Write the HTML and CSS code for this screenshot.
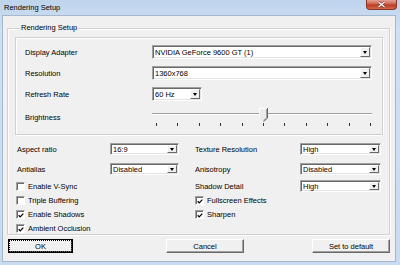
FILE: index.html
```html
<!DOCTYPE html>
<html lang="en">
<head>
    <meta charset="UTF-8">
    <title>Rendering Setup</title>
    <link rel="stylesheet" href="styles.css">
</head>
<body>
    <div class="window">
        <div class="titlebar">
            <span class="title">Rendering Setup</span>
            <span class="close">
                <svg width="9" height="7" viewBox="0 0 9 7">
                    <path d="M1.5 1 L7.5 6 M7.5 1 L1.5 6" stroke="#7a2a1f" stroke-width="2.4"/>
                    <path d="M1.5 1 L7.5 6 M7.5 1 L1.5 6" stroke="#fff" stroke-width="1.4"/>
                </svg>
            </span>
        </div>
        <div class="client">
            <fieldset class="group">
                <legend>Rendering Setup</legend>
                <div class="panel">
                    <div class="row">
                        <span class="label">Display Adapter</span>
                        <div class="combo wide"><span class="value">NVIDIA GeForce 9600 GT (1)</span><span class="drop"></span></div>
                    </div>
                    <div class="row">
                        <span class="label">Resolution</span>
                        <div class="combo wide"><span class="value">1360x768</span><span class="drop"></span></div>
                    </div>
                    <div class="row">
                        <span class="label">Refresh Rate</span>
                        <div class="combo narrow"><span class="value">60 Hz</span><span class="drop"></span></div>
                    </div>
                    <div class="row slider-row">
                        <span class="label">Brightness</span>
                        <div class="slider">
                            <div class="track"></div>
                            <div class="thumb" style="left: 107px">
                                <svg width="9" height="14" viewBox="0 0 9 14">
                                    <path d="M0 0 H9 V10 L4.5 14 L0 10 Z" fill="#ececec"/>
                                    <path d="M0.5 10.2 V0.5 H8" stroke="#fff" fill="none"/>
                                    <path d="M8.5 0 V10.2 L4.5 13.6" stroke="#696969" fill="none"/>
                                    <path d="M7.5 1 V9.8 L4.5 12.4" stroke="#a0a0a0" fill="none"/>
                                </svg>
                            </div>
                            <div class="ticks">
                                <i></i><i></i><i></i><i></i><i></i><i></i><i></i><i></i><i></i><i></i><i></i>
                            </div>
                        </div>
                    </div>
                </div>

                <div class="options">
                    <div class="col col-left">
                        <div class="orow">
                            <span class="olabel">Aspect ratio</span>
                            <div class="combo small"><span class="value">16:9</span><span class="drop"></span></div>
                        </div>
                        <div class="orow last-combo">
                            <span class="olabel">Antialias</span>
                            <div class="combo small"><span class="value">Disabled</span><span class="drop"></span></div>
                        </div>
                        <div class="check"><span class="box"></span>Enable V-Sync</div>
                        <div class="check"><span class="box"></span>Triple Buffering</div>
                        <div class="check"><span class="box checked"><svg width="7" height="7" viewBox="0 0 7 7"><path d="M0.8 3.2 L2.6 5.2 L6.2 1.2" stroke="#000" stroke-width="1.4" fill="none"/></svg></span>Enable Shadows</div>
                        <div class="check"><span class="box checked"><svg width="7" height="7" viewBox="0 0 7 7"><path d="M0.8 3.2 L2.6 5.2 L6.2 1.2" stroke="#000" stroke-width="1.4" fill="none"/></svg></span>Ambient Occlusion</div>
                    </div>
                    <div class="col col-right">
                        <div class="orow">
                            <span class="olabel">Texture Resolution</span>
                            <div class="combo medium"><span class="value">High</span><span class="drop"></span></div>
                        </div>
                        <div class="orow tight">
                            <span class="olabel">Anisotropy</span>
                            <div class="combo medium"><span class="value">Disabled</span><span class="drop"></span></div>
                        </div>
                        <div class="orow last-combo-right">
                            <span class="olabel">Shadow Detail</span>
                            <div class="combo medium"><span class="value">High</span><span class="drop"></span></div>
                        </div>
                        <div class="check"><span class="box checked"><svg width="7" height="7" viewBox="0 0 7 7"><path d="M0.8 3.2 L2.6 5.2 L6.2 1.2" stroke="#000" stroke-width="1.4" fill="none"/></svg></span>Fullscreen Effects</div>
                        <div class="check"><span class="box checked"><svg width="7" height="7" viewBox="0 0 7 7"><path d="M0.8 3.2 L2.6 5.2 L6.2 1.2" stroke="#000" stroke-width="1.4" fill="none"/></svg></span>Sharpen</div>
                    </div>
                </div>
            </fieldset>

            <div class="buttons">
                <div class="btn default">OK</div>
                <div class="btn cancel">Cancel</div>
                <div class="btn reset">Set to default</div>
            </div>
        </div>
    </div>
</body>
</html>
```

FILE: styles.css
```css
* {
    box-sizing: border-box;
}

body {
    margin: 0;
    font-family: "Liberation Sans", Arial, sans-serif;
    font-size: 7.5px;
    line-height: 9px;
    color: #000;
    background: #c6daf0;
}

.window {
    width: 400px;
    height: 265px;
    display: flex;
    flex-direction: column;
    background: linear-gradient(to bottom, #bed4ec, #cfe0f3 30px, #c8dbf0);
}

.titlebar {
    height: 15px;
    display: flex;
    justify-content: space-between;
    align-items: flex-start;
    padding-left: 4px;
}

.title {
    margin-top: 3px;
}

.close {
    width: 31px;
    height: 10px;
    margin-right: 3px;
    display: flex;
    align-items: center;
    justify-content: center;
    background: linear-gradient(to bottom, #e4a394, #d0604b 45%, #bd3a22 55%, #cf6a4f);
    border: 1px solid #8a3526;
    border-top: none;
    border-radius: 0 0 4px 4px;
}

.client {
    flex: 1;
    margin: 0 4px 3px 2px;
    padding: 7px 5px 0 4px;
    background: #f0f0f0;
    border: 1px solid #a7b8cc;
}

.group {
    margin: 0;
    width: 383px;
    padding: 4px 6px 1px 7px;
    border: 1px solid #d0d0d0;
    box-shadow: inset 1px 1px 0 #fff, 1px 1px 0 #fff;
}

.group legend {
    margin-left: 5px;
    padding: 0 1px;
    line-height: 10px;
    color: #000;
    background: #f0f0f0;
}

.panel {
    height: 98px;
    padding: 7px 9px 0 9px;
    border: 1px solid #d0d0d0;
    box-shadow: inset 1px 1px 0 #fff, 1px 1px 0 #fff;
}

.row {
    display: flex;
    align-items: center;
    height: 14px;
    margin-bottom: 7px;
}

.label {
    width: 127px;
}

.combo {
    height: 14px;
    display: flex;
    align-items: stretch;
    background: #fff;
    border: 1px solid;
    border-color: #a0a0a0 #fff #fff #a0a0a0;
    box-shadow: inset 1px 1px 0 #696969, inset -1px -1px 0 #e3e3e3;
}

.combo .value {
    flex: 1;
    padding-left: 2px;
    display: flex;
    align-items: center;
}

.combo .drop {
    width: 10px;
    margin: 1px 1px 1px 0;
    display: flex;
    align-items: center;
    justify-content: center;
    background: #f0f0f0;
    border: 1px solid;
    border-color: #fff #696969 #696969 #fff;
}

.combo .drop::after {
    content: "";
    border-left: 2px solid transparent;
    border-right: 2px solid transparent;
    border-top: 3px solid #000;
}

.combo.wide {
    width: 220px;
}

.combo.narrow {
    width: 50px;
}

.combo.small {
    width: 69px;
    height: 12px;
}

.combo.medium {
    width: 81px;
    height: 12px;
}

.slider-row {
    height: 19px;
    margin-bottom: 0;
}

.slider {
    position: relative;
    width: 220px;
    height: 19px;
}

.track {
    margin-top: 5px;
    height: 2px;
    border-top: 1px solid #a0a0a0;
    border-bottom: 1px solid #fff;
}

.thumb {
    position: absolute;
    top: 0;
    width: 9px;
    height: 14px;
}

.thumb svg {
    display: block;
}

.ticks {
    display: flex;
    justify-content: space-between;
    margin-top: 8px;
    padding: 0 1px 0 4px;
}

.ticks i {
    width: 1px;
    height: 3px;
    background: #333;
}

.options {
    display: flex;
    margin-top: 8px;
}

.col-left {
    width: 165px;
}

.col-right {
    width: 186px;
    margin-left: 15px;
}

.orow {
    display: flex;
    align-items: center;
    height: 12px;
    margin-bottom: 8px;
}

.col-left .olabel {
    width: 95px;
    padding-left: 2px;
}

.col-right .olabel {
    width: 105px;
}

.orow.last-combo {
    margin-bottom: 7px;
}

.orow.tight {
    margin-bottom: 5px;
}

.orow.last-combo-right {
    margin-bottom: 4px;
}

.check {
    display: flex;
    align-items: center;
    height: 9px;
    margin-bottom: 5px;
}

.check:last-child {
    margin-bottom: 0;
}

.col-left .check {
    padding-left: 1px;
}

.box {
    width: 9px;
    height: 9px;
    margin-right: 3px;
    display: flex;
    align-items: center;
    justify-content: center;
    background: #fff;
    border: 1px solid;
    border-color: #a0a0a0 #fff #fff #a0a0a0;
    box-shadow: inset 1px 1px 0 #696969;
}

.box svg {
    display: block;
    margin: 1px 0 0 1px;
}

.buttons {
    display: flex;
    margin-top: 4px;
    padding-left: 1px;
}

.btn {
    height: 14px;
    display: flex;
    align-items: center;
    justify-content: center;
    background: #f0f0f0;
    border: 1px solid;
    border-color: #fff #696969 #696969 #fff;
    box-shadow: inset -1px -1px 0 #a0a0a0;
}

.btn.default {
    width: 65px;
    border-color: #000;
    box-shadow: inset 1px 1px 0 #fff, inset -1px -1px 0 #696969;
    outline: 1px dotted #000;
    outline-offset: -2px;
}

.btn.cancel {
    width: 78px;
    margin-left: 93px;
}

.btn.reset {
    width: 78px;
    margin-left: 68px;
}
```
